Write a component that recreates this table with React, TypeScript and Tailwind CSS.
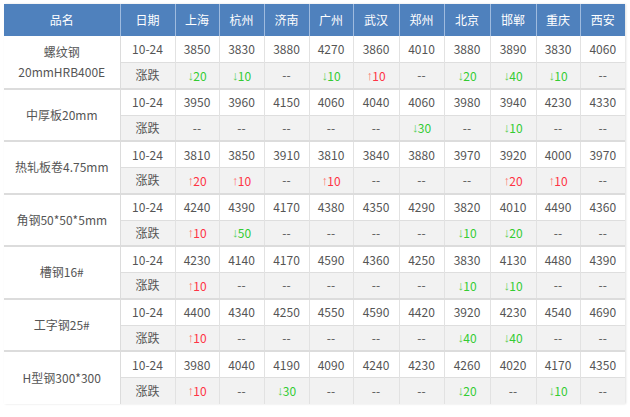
import React from 'react';

type Group = {
  name: string[];
  prices: number[];
  changes: string[];
};

const cities = ['上海', '杭州', '济南', '广州', '武汉', '郑州', '北京', '邯郸', '重庆', '西安'];
const colWidths = [116, 55, 44, 45, 45, 44, 46, 45, 46, 46, 44, 45];

const groups: Group[] = [
  {
    name: ['螺纹钢', '20mmHRB400E'],
    prices: [3850, 3830, 3880, 4270, 3860, 4010, 3880, 3890, 3830, 4060],
    changes: ['-20', '-10', '', '-10', '+10', '', '-20', '-40', '-10', ''],
  },
  {
    name: ['中厚板20mm'],
    prices: [3950, 3960, 4150, 4060, 4040, 4060, 3980, 3940, 4230, 4330],
    changes: ['', '', '', '', '', '-30', '', '-10', '', ''],
  },
  {
    name: ['热轧板卷4.75mm'],
    prices: [3810, 3850, 3910, 3810, 3840, 3880, 3970, 3920, 4000, 3970],
    changes: ['+20', '+10', '', '+10', '', '', '', '+20', '+10', ''],
  },
  {
    name: ['角钢50*50*5mm'],
    prices: [4240, 4390, 4170, 4380, 4350, 4290, 3820, 4010, 4490, 4360],
    changes: ['+10', '-50', '', '', '', '', '-10', '-20', '', ''],
  },
  {
    name: ['槽钢16#'],
    prices: [4230, 4140, 4170, 4590, 4360, 4250, 3830, 4130, 4480, 4390],
    changes: ['+10', '', '', '', '', '', '-10', '-10', '', ''],
  },
  {
    name: ['工字钢25#'],
    prices: [4400, 4340, 4250, 4550, 4590, 4420, 3920, 4230, 4540, 4690],
    changes: ['+10', '', '', '', '', '', '-40', '-40', '', ''],
  },
  {
    name: ['H型钢300*300'],
    prices: [3980, 4040, 4190, 4090, 4240, 4230, 4260, 4020, 4170, 4350],
    changes: ['+10', '', '-30', '', '', '', '-20', '', '-10', ''],
  },
];

// arrow + amount, or "--" when the price didn't move
const Change = ({ value }: { value: string }) => {
  if (!value) return <span>--</span>;
  const up = value.startsWith('+');
  return (
    <span className={`inline-flex items-center ${up ? 'text-[#ff3344]' : 'text-[#33cc33]'}`}>
      <span
        className={`inline-block w-[7px] text-[13px] leading-[14px] font-['Liberation_Sans'] -mr-[1px] ${up ? 'text-[#ff7070]' : 'text-[#5fcf5f]'}`}
      >
        {up ? '↑' : '↓'}
      </span>
      {value.slice(1)}
    </span>
  );
};

export default function App() {
  return (
    <div
      className="w-[630px] h-[417px] bg-white pt-[4px] pl-[4px]"
      style={{ fontFamily: '"Noto Sans CJK SC", "Noto Sans", sans-serif' }}
    >
      <table className="table-fixed border-collapse w-[621px] text-[12px] text-[#555] shadow-[1px_0_2px_rgba(0,0,0,0.12)]">
        <colgroup>
          {colWidths.map((w, i) => (
            <col key={i} style={{ width: w }} />
          ))}
        </colgroup>
        <thead>
          <tr className="h-[32px] bg-[#4f81bd] text-white">
            <th className="font-normal border-x border-[#9fbbdf] border-l-0">品名</th>
            <th className="font-normal border-x border-[#9fbbdf]">日期</th>
            {cities.map((c, i) => (
              <th key={c} className={`font-normal border-x border-[#9fbbdf] ${i === cities.length - 1 ? 'border-r-0' : ''}`}>
                {c}
              </th>
            ))}
          </tr>
        </thead>
        <tbody>
          {groups.map((g, gi) => (
            <React.Fragment key={gi}>
              <tr className={`h-[26.5px] ${gi > 0 ? 'border-t-2 border-[#dcdcdc]' : ''}`}>
                <td rowSpan={2} className="text-center leading-[20px] border-r border-[#dcdcdc] bg-white">
                  {g.name.map(n => (
                    <div key={n}>{n}</div>
                  ))}
                </td>
                <td className="text-center border-r border-[#e2e2e2]">10-24</td>
                {g.prices.map((p, i) => (
                  <td key={i} className="text-center border-r border-[#e2e2e2] last:border-r-0">
                    {p}
                  </td>
                ))}
              </tr>
              <tr className="h-[26px] bg-[#f2f2f2] border-t border-[#dedede]">
                <td className="text-center border-r border-[#e2e2e2]">涨跌</td>
                {g.changes.map((c, i) => (
                  <td key={i} className="text-center border-r border-[#e2e2e2] last:border-r-0">
                    <Change value={c} />
                  </td>
                ))}
              </tr>
            </React.Fragment>
          ))}
        </tbody>
      </table>
    </div>
  );
}
